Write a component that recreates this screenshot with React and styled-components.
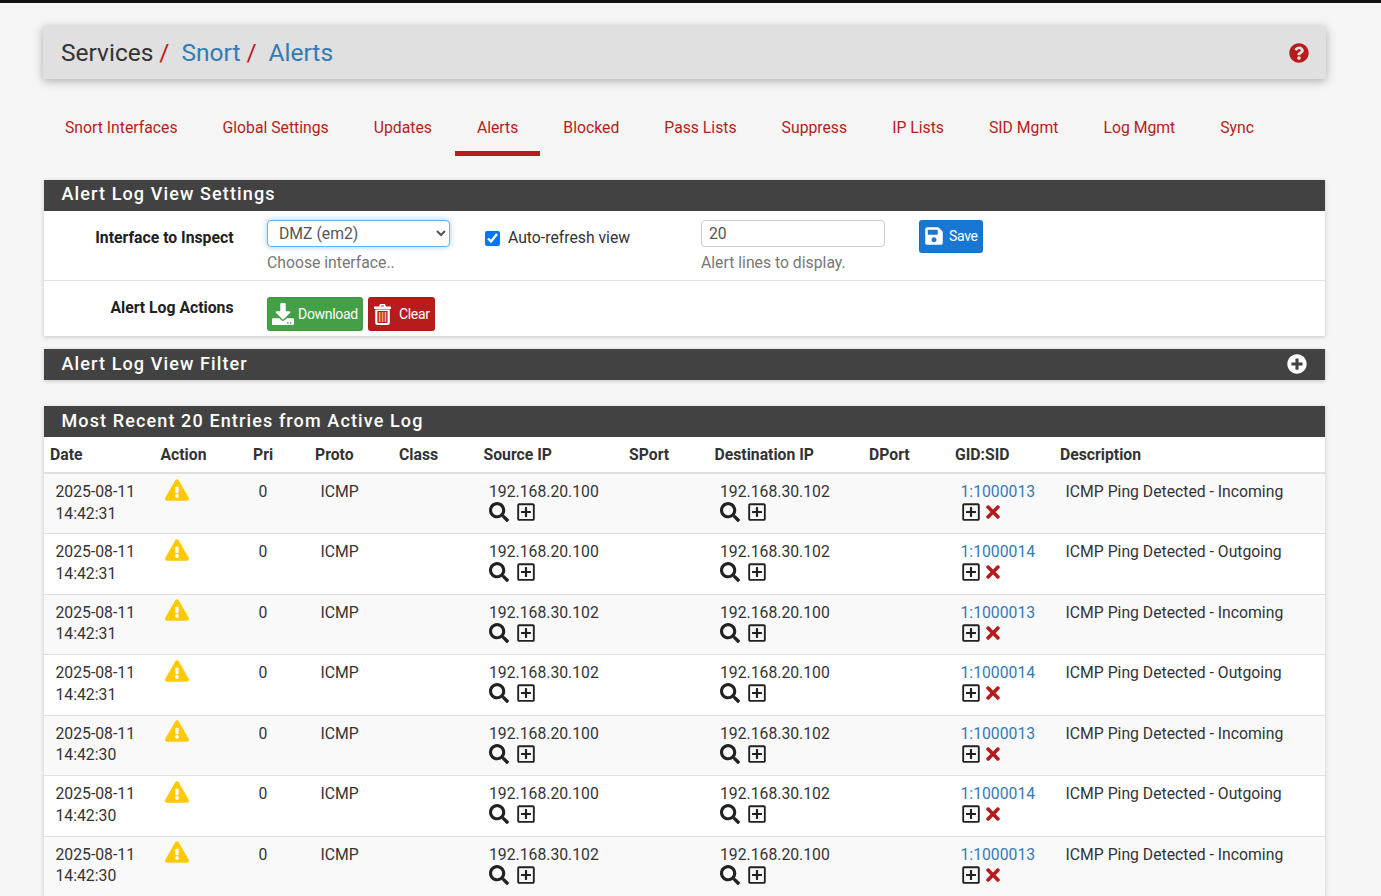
import styled, {createGlobalStyle} from 'styled-components';
import {
    FaSave,
    FaDownload,
    FaSearch,
    FaRegPlusSquare,
    FaTimes,
    FaExclamationTriangle,
    FaQuestionCircle,
    FaPlusCircle
} from 'react-icons/fa';

const GlobalStyle = createGlobalStyle `
  html, body {
    margin: 0;
    height: 896px;
    overflow: hidden;
    background: #f5f5f5;
    color: #212121;
    font-family: Roboto, "Liberation Sans", sans-serif;
    font-size: 15.75px;
    line-height: 22.5px;
  }
`;

const TopBar = styled.div `
  height: 3px;
  background: #111;
`;

const Page = styled.div `
  width: 1283px;
  margin-left: 43px;
  padding-top: 23px;
`;

const Breadcrumb = styled.div `
  height: 53px;
  display: flex;
  align-items: center;
  justify-content: space-between;
  padding: 0 17px 0 18px;
  background: #e0e0e0;
  border-radius: 2px;
  box-shadow: 0 2px 10px rgba(0, 0, 0, .3);
`;

const Crumbs = styled.h1 `
  margin: 0;
  padding-top: 1px;
  font-size: 24.5px;
  font-weight: 400;
  display: flex;
`;

const Crumb = styled.span `
  color: ${p => p.$link ? '#337ab7' : '#333'};
  margin-right: 6px;
`;

const Slash = styled.span `
  color: #b71c1c;
  margin-right: 12px;
`;

const HelpIcon = styled(FaQuestionCircle) `
  color: #b71c1c;
  font-size: 20px;
`;

const Tabs = styled.nav `
  display: flex;
  margin-top: 23px;
  padding-left: .5px;
`;

const Tab = styled.a `
  display: block;
  margin-right: 2px;
  padding: 15px 21.5px 11px;
  color: #b71c1c;
  font-size: 15.75px;
  border-bottom: 5px solid ${p => p.$active ? '#b71c1c' : 'transparent'};
`;

const Panel = styled.section `
  margin: ${p => p.$top} 1px 0 1px;
  background: #fff;
  box-shadow: 0 1px 4px rgba(0, 0, 0, .2);
`;

const PanelHeading = styled.h2 `
  margin: 0;
  height: 31px;
  box-sizing: border-box;
  display: flex;
  align-items: center;
  justify-content: space-between;
  padding: 0 18.5px ${p => p.$lift || '0'} 17.5px;
  background: #424242;
  color: #fff;
  font-size: 18px;
  font-weight: 500;
  letter-spacing: 1.12px;
`;

const PlusIcon = styled(FaPlusCircle) `
  font-size: 20px;
`;

const FormRow = styled.div `
  display: grid;
  grid-template-columns: 223px 218px 216px 218px auto;
  height: ${p => p.$height};
  padding-top: ${p => p.$pad};
  box-sizing: border-box;
  border-bottom: ${p => p.$last ? 'none' : '1px solid #e0e0e0'};
`;

const FormLabel = styled.label `
  text-align: right;
  padding: ${p => p.$pad} 33.5px 0 0;
  font-weight: 700;
`;

const ActionCell = styled.div `
  grid-column: span 4;
`;

const Select = styled.select `
  display: block;
  width: 183px;
  height: 27px;
  padding: 0 7px;
  background: #fff;
  color: #555;
  font: 15.75px Roboto, sans-serif;
  border: 1px solid #66afe9;
  border-radius: 4px;
  box-shadow: 0 0 6px rgba(102, 175, 233, .6);
  outline: none;
`;

const Help = styled.div `
  margin-top: 5px;
  color: #777;
`;

const CheckLabel = styled.label `
  display: flex;
  align-items: center;
  height: 37px;
  color: #333;
`;

const Check = styled.input `
  width: 15px;
  height: 15px;
  margin: 0 8px 0 0;
`;

const TextInput = styled.input `
  display: block;
  width: 184px;
  height: 27px;
  box-sizing: border-box;
  padding: 0 7px;
  border: 1px solid #ccc;
  border-radius: 4px;
  background: #fff;
  color: #555;
  font: 15.75px Roboto, sans-serif;
`;

const Button = styled.button `
  display: inline-flex;
  align-items: center;
  gap: ${p => p.$gap};
  height: ${p => p.$height || '34px'};
  margin-right: 5px;
  padding: 0 4px;
  background: ${p => p.$color};
  color: #fff;
  border: 1px solid rgba(0, 0, 0, .05);
  border-radius: 3px;
  font: 14px Roboto, sans-serif;
  letter-spacing: -.3px;
  & > svg {
    font-size: ${p => p.$icon || '20px'};
    flex: none;
  }
`;

const Table = styled.table `
  width: 100%;
  table-layout: fixed;
  border-collapse: collapse;
`;

const Th = styled.th `
  height: 36.5px;
  padding: 2px 6px 0;
  box-sizing: border-box;
  text-align: left;
  font-weight: 700;
  color: #333;
  background: #fff;
  border-bottom: 2px solid #e0e0e0;
  white-space: nowrap;
`;

const Row = styled.tr `
  background: ${p => p.$odd ? '#f9f9f9' : '#fff'};
  height: 60.5px;
  border-bottom: 1px solid #e0e0e0;
`;

const Td = styled.td `
  padding: 7.2px 6px 6px 11.5px;
  vertical-align: top;
  color: #333;
  line-height: 21.6px;
  white-space: nowrap;
`;

const Link = styled.a `
  color: #337ab7;
`;

const Icons = styled.div `
  display: flex;
  align-items: center;
  gap: ${p => p.$gap};
  height: 22px;
  margin-top: -1.65px;
`;

const WarnIcon = styled(FaExclamationTriangle) `
  display: block;
  color: #ffc900;
  font-size: 24px;
  margin: -3.5px 0 0 -1px;
`;

const SearchIcon = styled(FaSearch) `
  color: #212121;
  font-size: 20px;
`;

const BoxIcon = styled(FaRegPlusSquare) `
  color: #212121;
  font-size: 20px;
`;

const CloseIcon = styled(FaTimes) `
  color: #b71c1c;
  font-size: 20px;
`;

const TrashSvg = styled.svg `
  margin: 0 1px;
`;

const TrashIcon = () => (
    <TrashSvg width="17" height="21" viewBox="0 0 17 21">
        <path fill="#fff" d="M0 2.6h5l1-2.6h5l1 2.6h5v2.4H0zM7.4 1.4 7 2.6h3l-.4-1.2z"/>
        <path fill="#fff" d="M1.2 5.5h14.6v13a2.5 2.5 0 0 1-2.5 2.5H3.7a2.5 2.5 0 0 1-2.5-2.5zM3.4 7v11.2c0 .5.3.8.8.8h8.6c.5 0 .8-.3.8-.8V7z"/>
        <path fill="#ffb74d" d="M4.8 8h1.7v10H4.8z"/>
        <path fill="#ffa270" d="M7.7 8h1.7v10H7.7z"/>
        <path fill="#f8a5c2" d="M10.6 8h1.7v10h-1.7z"/>
    </TrashSvg>
);

const tabs = ['Snort Interfaces', 'Global Settings', 'Updates', 'Alerts', 'Blocked', 'Pass Lists', 'Suppress', 'IP Lists', 'SID Mgmt', 'Log Mgmt', 'Sync'];

const columns = [
    ['Date', 110.5],
    ['Action', 92.5],
    ['Pri', 62],
    ['Proto', 84],
    ['Class', 84.5],
    ['Source IP', 145.5],
    ['SPort', 85.5],
    ['Destination IP', 154.5],
    ['DPort', 86],
    ['GID:SID', 105],
    ['Description', 271]
];

const entries = [
    ['14:42:31', '192.168.20.100', '192.168.30.102', '1:1000013', 'ICMP Ping Detected - Incoming'],
    ['14:42:31', '192.168.20.100', '192.168.30.102', '1:1000014', 'ICMP Ping Detected - Outgoing'],
    ['14:42:31', '192.168.30.102', '192.168.20.100', '1:1000013', 'ICMP Ping Detected - Incoming'],
    ['14:42:31', '192.168.30.102', '192.168.20.100', '1:1000014', 'ICMP Ping Detected - Outgoing'],
    ['14:42:30', '192.168.20.100', '192.168.30.102', '1:1000013', 'ICMP Ping Detected - Incoming'],
    ['14:42:30', '192.168.20.100', '192.168.30.102', '1:1000014', 'ICMP Ping Detected - Outgoing'],
    ['14:42:30', '192.168.30.102', '192.168.20.100', '1:1000013', 'ICMP Ping Detected - Incoming']
];

const IpCell = ({ip}) => (
    <Td>
        {ip}
        <Icons $gap="7px">
            <SearchIcon/>
            <BoxIcon/>
        </Icons>
    </Td>
);

export default function App() {
    return (
        <>
            <GlobalStyle/>
            <TopBar/>
            <Page>
                <Breadcrumb>
                    <Crumbs>
                        <Crumb>Services</Crumb>
                        <Slash>/</Slash>
                        <Crumb $link>Snort</Crumb>
                        <Slash>/</Slash>
                        <Crumb $link>Alerts</Crumb>
                    </Crumbs>
                    <HelpIcon/>
                </Breadcrumb>
                <Tabs>
                    {tabs.map((t) => (
                        <Tab key={t} $active={t === 'Alerts'}>{t}</Tab>
                    ))}
                </Tabs>
                <Panel $top="24px">
                    <PanelHeading $lift="1px">Alert Log View Settings</PanelHeading>
                    <FormRow $height="70px" $pad="9px">
                        <FormLabel $pad="7px">Interface to Inspect</FormLabel>
                        <div>
                            <Select defaultValue="DMZ (em2)">
                                <option>DMZ (em2)</option>
                            </Select>
                            <Help>Choose interface..</Help>
                        </div>
                        <CheckLabel>
                            <Check type="checkbox" defaultChecked/>
                            Auto-refresh view
                        </CheckLabel>
                        <div>
                            <TextInput defaultValue="20"/>
                            <Help>Alert lines to display.</Help>
                        </div>
                        <div>
                            <Button $color="#1976d2" $height="33px" $gap="5px"><FaSave/>Save</Button>
                        </div>
                    </FormRow>
                    <FormRow $height="55px" $pad="16px" $last>
                        <FormLabel $pad="0">Alert Log Actions</FormLabel>
                        <ActionCell>
                            <Button $color="#43a047" $gap="4px" $icon="22px"><FaDownload/>Download</Button>
                            <Button $color="#b71c1c" $gap="7px"><TrashIcon/>Clear</Button>
                        </ActionCell>
                    </FormRow>
                </Panel>
                <Panel $top="13px">
                    <PanelHeading>Alert Log View Filter<PlusIcon/></PanelHeading>
                </Panel>
                <Panel $top="26px">
                    <PanelHeading>Most Recent 20 Entries from Active Log</PanelHeading>
                    <Table>
                        <colgroup>
                            {columns.map(([name, width]) => (
                                <col key={name} width={width}/>
                            ))}
                        </colgroup>
                        <thead>
                            <tr>
                                {columns.map(([name]) => (
                                    <Th key={name}>{name}</Th>
                                ))}
                            </tr>
                        </thead>
                        <tbody>
                            {entries.map(([time, src, dst, sid, desc], i) => (
                                <Row key={i} $odd={i % 2 === 0}>
                                    <Td>2025-08-11<br/>{time}</Td>
                                    <Td><WarnIcon/></Td>
                                    <Td>0</Td>
                                    <Td>ICMP</Td>
                                    <Td/>
                                    <IpCell ip={src}/>
                                    <Td/>
                                    <IpCell ip={dst}/>
                                    <Td/>
                                    <Td>
                                        <Link>{sid}</Link>
                                        <Icons $gap="2px">
                                            <BoxIcon/>
                                            <CloseIcon/>
                                        </Icons>
                                    </Td>
                                    <Td>{desc}</Td>
                                </Row>
                            ))}
                        </tbody>
                    </Table>
                </Panel>
            </Page>
        </>
    );
}
